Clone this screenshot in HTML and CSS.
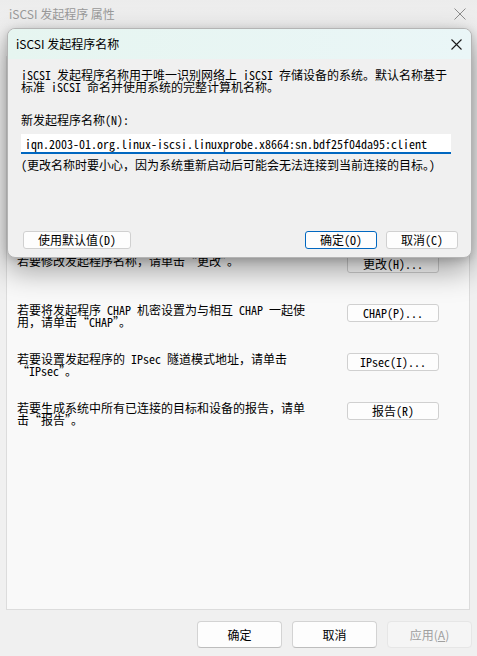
FILE: index.html
```html
<!DOCTYPE html>
<html lang="zh-CN">
<head>
<meta charset="utf-8">
<title>iSCSI 发起程序 属性</title>
<link rel="stylesheet" href="styles.css">
</head>
<body>
<div class="window">
  <div class="titlebar">
    <span class="title">iSCSI 发起程序 属性</span>
    <svg class="close outer-close" width="12" height="12" viewBox="0 0 12 12"><path d="M0.5 0.5 L11.5 11.5 M11.5 0.5 L0.5 11.5" stroke="#8c8c8c" stroke-width="1" fill="none"/></svg>
  </div>

  <div class="panel">
    <div class="rows">
      <div class="row">
        <p class="desc">若要修改发起程序名称，请单击“更改”。</p>
        <button class="btn small">更改(H)...</button>
      </div>
      <div class="row">
        <p class="desc">若要将发起程序 CHAP 机密设置为与相互 CHAP 一起使用，请单击“CHAP”。</p>
        <button class="btn small">CHAP(P)...</button>
      </div>
      <div class="row">
        <p class="desc">若要设置发起程序的 IPsec 隧道模式地址，请单击“IPsec”。</p>
        <button class="btn small">IPsec(I)...</button>
      </div>
      <div class="row">
        <p class="desc">若要生成系统中所有已连接的目标和设备的报告，请单击“报告”。</p>
        <button class="btn small">报告(R)</button>
      </div>
    </div>
  </div>

  <div class="footer">
    <button class="fbtn">确定</button>
    <button class="fbtn">取消</button>
    <button class="fbtn disabled">应用(<u>A</u>)</button>
  </div>
</div>

<div class="dialog">
  <div class="dlg-title">
    <span>iSCSI 发起程序名称</span>
    <svg class="close" width="11" height="11" viewBox="0 0 11 11"><path d="M0.5 0.5 L10.5 10.5 M10.5 0.5 L0.5 10.5" stroke="#1a1a1a" stroke-width="1.1" fill="none"/></svg>
  </div>
  <div class="dlg-body">
    <p class="intro">iSCSI 发起程序名称用于唯一识别网络上 iSCSI 存储设备的系统。默认名称基于标准 iSCSI 命名并使用系统的完整计算机名称。</p>
    <label class="label" for="name">新发起程序名称(N):</label>
    <input class="field" id="name" type="text" value="iqn.2003-01.org.linux-iscsi.linuxprobe.x8664:sn.bdf25f04da95:client">
    <p class="note">(更改名称时要小心，因为系统重新启动后可能会无法连接到当前连接的目标。)</p>
    <div class="dlg-buttons">
      <button class="btn default-btn">使用默认值(D)</button>
      <div class="spacer"></div>
      <button class="btn dbtn primary">确定(O)</button>
      <button class="btn dbtn">取消(C)</button>
    </div>
  </div>
</div>
</body>
</html>
```

FILE: styles.css
```css
* { box-sizing: border-box; }

html, body {
  margin: 0;
  padding: 0;
}

body {
  width: 477px;
  height: 656px;
  overflow: hidden;
  background: #f0f0f0;
  font-family: "Noto Sans Mono CJK SC", "Noto Sans CJK SC", monospace;
  font-size: 12px;
  line-height: 12px;
  color: #000;
  position: relative;
}

p { margin: 0; }

.window {
  height: 656px;
  display: flex;
  flex-direction: column;
}

.titlebar {
  height: 28px;
  flex: none;
  display: flex;
  align-items: center;
  justify-content: space-between;
  padding: 0 11px 0 9px;
  background: linear-gradient(#ececec, #f0f0f0);
}

.titlebar .title {
  font-family: "Noto Sans CJK SC", sans-serif;
  font-size: 12px;
  color: #9a9a9a;
}

.panel {
  flex: 1;
  margin: 28px 7px 0 6px;
  background: #f9f9f9;
  border: 1px solid #dcdcdc;
  padding: 198px 30px 0 10px;
}

.rows {
  display: flex;
  flex-direction: column;
  gap: 25px;
}

.row {
  height: 24px;
  display: grid;
  grid-template-columns: 294px 92px;
  justify-content: space-between;
  align-items: start;
}

.desc {
  line-height: 12px;
}

.btn {
  font-family: "Noto Sans Mono CJK SC", "Noto Sans CJK SC", monospace;
  font-size: 12px;
  line-height: 12px;
  color: #000;
  background: #fdfdfd;
  border: 1px solid #d0d0d0;
  border-radius: 3px;
  height: 18px;
  padding: 0;
  margin: 0;
}

.btn.small {
  width: 92px;
}

.footer {
  height: 46px;
  flex: none;
  display: flex;
  justify-content: flex-end;
  gap: 10px;
  padding: 11px 5px 0 0;
}

.fbtn {
  width: 85px;
  height: 27px;
  font-family: "Noto Sans CJK SC", sans-serif;
  font-size: 12px;
  color: #000;
  background: #fdfdfd;
  border: 1px solid #d3d3d3;
  border-bottom-color: #bdbdbd;
  border-radius: 4px;
  padding: 0;
}

.fbtn.disabled {
  background: #f5f5f5;
  border-color: #e6e6e6;
  color: #a0a0a0;
}

/* dialog overlay */
.dialog {
  position: absolute;
  left: 7px;
  top: 28px;
  width: 465px;
  height: 230px;
  border: 1px solid #b4b4b4;
  border-radius: 8px;
  overflow: hidden;
  background: #f0f0f0;
  box-shadow: 0 12px 30px rgba(0, 0, 0, 0.38), 0 2px 8px rgba(0, 0, 0, 0.16);
}

.dlg-title {
  height: 30px;
  display: flex;
  align-items: center;
  justify-content: space-between;
  padding: 0 9px 0 8px;
  background: linear-gradient(to right, #e6f5f0, #eaf6f7);
  font-family: "Noto Sans CJK SC", sans-serif;
  font-size: 12px;
}

.dlg-body {
  padding: 10px 13px 0 13px;
  display: flex;
  flex-direction: column;
  align-items: flex-start;
}

.intro {
  width: 432px;
}

.label {
  margin-top: 21px;
  display: block;
}

.field {
  margin-top: 8px;
  width: 430px;
  height: 20px;
  border: none;
  border-bottom: 2px solid #0067c0;
  background: #fff;
  padding: 0 4px;
  font-family: "Noto Sans Mono CJK SC", "Noto Sans CJK SC", monospace;
  font-size: 12px;
  color: #000;
  outline: none;
}

.note {
  margin-top: 5px;
}

.dlg-buttons {
  margin-top: 60px;
  width: 100%;
  display: flex;
  gap: 9px;
}

.spacer { flex: 1; }

.default-btn {
  width: 108px;
  margin-left: 2px;
}

.dbtn {
  width: 72px;
}

.dbtn.primary {
  border-color: #0067c0;
}
```
